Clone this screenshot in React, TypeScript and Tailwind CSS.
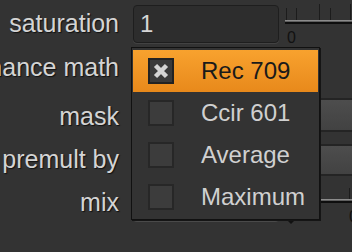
const labelCls =
  'whitespace-nowrap text-[25px] text-[#d4d4d4] [text-shadow:1px_1px_1px_#111]';

const Label = ({ text, className = '' }: { text: string; className?: string }) => (
  <div className={`w-[119px] shrink-0 flex justify-end mr-[14px] ${className}`}>
    <span className={labelCls}>{text}</span>
  </div>
);

const Slider = ({ label, bottomTicks }: { label: string; bottomTicks?: boolean }) => (
  <svg width="67" height="48" viewBox="0 0 67 48" className="ml-[6px] shrink-0 self-start">
    {bottomTicks ? (
      <>
        <rect x="64" y="10" width="1" height="11" fill="#1c1c1c" />
        <rect x="0" y="21" width="67" height="1.5" fill="#8c8c8c" />
        <rect x="0" y="23" width="67" height="2" fill="#0e0e0e" />
        <polygon points="3,43 9,43 6,46" fill="#111" />
        <text x="64" y="44" fontSize="16" fill="#111" fontFamily="Liberation Sans, Arial, sans-serif">
          {label}
        </text>
      </>
    ) : (
      <>
        <rect x="1" y="8" width="1" height="12" fill="#1c1c1c" />
        <rect x="11" y="8" width="1" height="12" fill="#1c1c1c" />
        <rect x="34" y="4" width="1" height="16" fill="#1c1c1c" />
        <rect x="45" y="8" width="1" height="12" fill="#1c1c1c" />
        <rect x="65" y="4" width="1" height="16" fill="#1c1c1c" />
        <rect x="0" y="20" width="67" height="1.5" fill="#8c8c8c" />
        <rect x="0" y="22" width="67" height="2" fill="#0e0e0e" />
        <text x="2" y="43" fontSize="16" fill="#111" fontFamily="Liberation Sans, Arial, sans-serif">
          {label}
        </text>
      </>
    )}
  </svg>
);

const options = ['Rec 709', 'Ccir 601', 'Average', 'Maximum'];

const App = () => {
  const selected = 0;

  return (
    <div
      className="relative w-full h-[252px] overflow-hidden bg-[#333333]"
      style={{ fontFamily: '"Liberation Sans", Arial, sans-serif' }}
    >
      {/* saturation */}
      <div className="flex items-center h-[48px]">
        <Label text="saturation" />
        <div className="w-[146px] h-[38px] shrink-0 rounded-[4px] bg-[#2d2d2d] border border-[#1e1e1e] shadow-[0_1px_0_#424242] flex items-center px-[6px]">
          <span className="text-[24px] text-[#d6d6d6]">1</span>
        </div>
        <Slider label="0" />
      </div>

      {/* luminance math */}
      <div className="flex items-center h-[40px]">
        <Label text="luminance math" />
      </div>

      {/* mask */}
      <div className="flex items-center h-[54px]">
        <Label text="mask" className="pt-[4px]" />
        <div className="flex-1 h-[34px] rounded-l-[4px] border-y-2 border-l-2 border-[#242424] bg-linear-to-b from-[#4d4d4d] to-[#424242]" />
      </div>

      {/* premult by */}
      <div className="flex items-center h-[36px]">
        <Label text="premult by" />
        <div className="flex-1 h-[32px] rounded-l-[4px] border-y-2 border-l-2 border-[#242424] bg-linear-to-b from-[#4d4d4d] to-[#424242]" />
      </div>

      {/* mix */}
      <div className="flex items-center h-[50px]">
        <Label text="mix" />
        <div className="w-[146px] h-[36px] shrink-0 rounded-[4px] bg-[#2d2d2d] border border-[#1e1e1e] shadow-[0_1px_0_#4a4a4a]" />
        <Slider label="0" bottomTicks />
      </div>

      {/* dropdown menu */}
      <div className="absolute left-[131px] top-[47px] w-[189px] border border-[#111] bg-[#333333] pt-[2px] pb-[1px] px-[1px] shadow-[1px_1px_0_#151515]">
        {options.map((opt, i) => {
          const active = i === selected;
          return (
            <div
              key={opt}
              className={`flex items-center h-[42px] ${
                active ? 'bg-linear-to-b from-[#f8a22e] to-[#e8891b]' : ''
              }`}
            >
              <div
                className={`ml-[15px] w-[26px] h-[26px] shrink-0 flex items-center justify-center border-2 ${
                  active ? 'border-[#222] bg-[#3a3a3a]' : 'border-[#272727] bg-[#3c3c3c]'
                }`}
              >
                {active && (
                  <svg width="16" height="16" viewBox="0 0 16 16">
                    <path d="M2.5 2.5 L13.5 13.5 M13.5 2.5 L2.5 13.5" stroke="#d4d4d4" strokeWidth="4.5" />
                  </svg>
                )}
              </div>
              <span
                className={`ml-[27px] text-[24px] whitespace-nowrap ${
                  active ? 'text-[#1a1a1a]' : 'text-[#d0d0d0]'
                }`}
              >
                {opt}
              </span>
            </div>
          );
        })}
      </div>
    </div>
  );
};

export default App;
